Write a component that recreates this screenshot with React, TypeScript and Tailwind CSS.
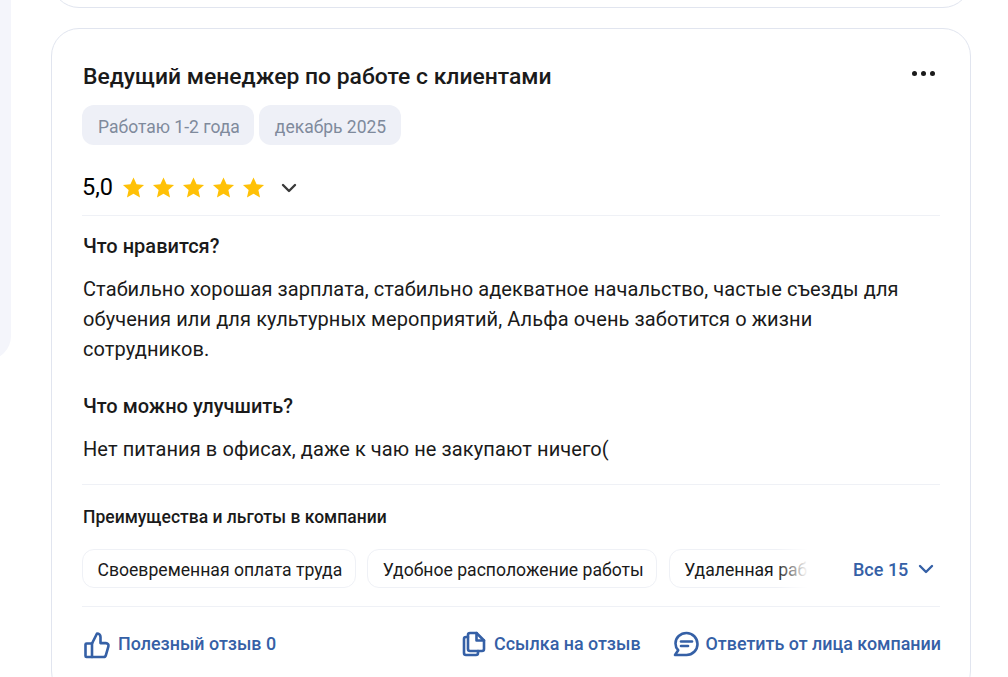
import { ChevronDown } from 'lucide-react';

const benefits = ['Своевременная оплата труда', 'Удобное расположение работы', 'Удаленная работа'];

function Star() {
  return (
    <svg width="23" height="23" viewBox="0 0 24 24" className="fill-[#ffc107]">
      <path d="M12 1.500l3.200 7.200 7.800.8-5.900 5.200 1.700 7.700L12 18.400l-6.800 4 1.700-7.700L1 9.500l7.800-.8z" />
    </svg>
  );
}

function ThumbIcon() {
  return (
    <svg width="28" height="28" viewBox="0 0 28 28" fill="none" className="stroke-[#3560a6]" strokeWidth="2.6" strokeLinejoin="round" strokeLinecap="round">
      <path d="M9 12.500H3.500a1 1 0 0 0-1 1V25a1 1 0 0 0 1 1H20.500a2.500 2.500 0 0 0 2.400-1.900l2.500-8.800a2.500 2.500 0 0 0-2.400-3.200H17.500V6a3.500 3.500 0 0 0-3.500-3.500L9 12.500z" />
      <path d="M9 12.500V26" />
    </svg>
  );
}

function CopyIcon() {
  return (
    <svg width="24" height="26" viewBox="0 0 24 26" fill="none" className="stroke-[#3560a6]" strokeWidth="2.6" strokeLinejoin="round" strokeLinecap="round">
      <path d="M8 2h6.500L22 9.500V18a2 2 0 0 1-2 2H8a2 2 0 0 1-2-2V4a2 2 0 0 1 2-2z" />
      <path d="M14.500 2v7.500H22" />
      <path d="M6 6H4a2 2 0 0 0-2 2v14a2 2 0 0 0 2 2h10a2 2 0 0 0 2-2v-2" />
    </svg>
  );
}

function ChatIcon() {
  return (
    <svg width="26" height="26" viewBox="0 0 26 26" fill="none" className="stroke-[#3560a6]" strokeWidth="2.6" strokeLinejoin="round" strokeLinecap="round">
      <path d="M13.500 2C7.400 2 2.500 6.600 2.500 12.400c0 2.600 1 5 2.700 6.800L2 24h11.500c6.100 0 11-4.900 11-11S19.600 2 13.500 2z" />
      <path d="M8 10.500h11" />
      <path d="M8 15h7" />
    </svg>
  );
}

export default function App() {
  return (
    <div className="flex h-[677px] w-[1008px] overflow-hidden bg-white font-['Roboto',sans-serif] text-[#1a1a1a]">
      <div className="-ml-6 h-[360px] w-[35px] shrink-0 rounded-br-3xl bg-[#f4f5fb]" />

      <div className="ml-10 w-[920px] shrink-0">
        <div className="-mt-10 h-12 rounded-b-[28px] border border-[#e1e5ef] bg-white" />

        <article className="mt-5 rounded-[28px] border border-[#e1e5ef] bg-white px-[30px] pt-[31px] pb-4">
          <div className="flex items-start justify-between">
            <h2 className="ml-px text-[22.900px] leading-[33px] font-medium">Ведущий менеджер по работе с клиентами</h2>
            <div className="mt-[11px] mr-[5px] flex gap-1">
              <span className="h-[5px] w-[5px] rounded-full bg-[#1a1a1a]" />
              <span className="h-[5px] w-[5px] rounded-full bg-[#1a1a1a]" />
              <span className="h-[5px] w-[5px] rounded-full bg-[#1a1a1a]" />
            </div>
          </div>

          <div className="mt-3 flex gap-[5px]">
            <span className="flex h-10 items-center rounded-xl bg-[#eef0f7] pt-1 pr-[14px] pl-4 text-[17.500px] text-[#7f8a9c]">Работаю 1-2 года</span>
            <span className="flex h-10 items-center rounded-xl bg-[#eef0f7] pt-1 pr-[15px] pl-4 text-[17.500px] text-[#7f8a9c]">декабрь 2025</span>
          </div>

          <div className="mt-[26px] flex h-[33px] items-center">
            <span className="text-[23.500px] leading-[33px] text-black">5,0</span>
            <div className="ml-[9px] flex gap-[7px]">
              <Star />
              <Star />
              <Star />
              <Star />
              <Star />
            </div>
            <ChevronDown className="ml-[12px] h-6 w-6 text-[#3a3a3a]" strokeWidth={2.4} />
          </div>

          <div className="mt-[11px] border-t border-[#eff1f6] pt-[17px] pl-px">
            <h3 className="text-[20px] leading-[27px] font-medium">Что нравится?</h3>
            <p className="mt-[14px] w-[840px] text-[20px] leading-[30px] tracking-[0.09px]">
              Стабильно хорошая зарплата, стабильно адекватное начальство, частые съезды для обучения или для культурных мероприятий, Альфа очень заботится о жизни сотрудников.
            </p>
            <h3 className="mt-[29px] text-[20px] leading-[27px] font-medium">Что можно улучшить?</h3>
            <p className="mt-[14px] text-[20px] leading-[30px] tracking-[0.09px]">Нет питания в офисах, даже к чаю не закупают ничего(</p>
          </div>

          <div className="mt-5 border-t border-[#eff1f6] pt-5">
            <h4 className="ml-px text-[17.500px] leading-6 font-medium">Преимущества и льготы в компании</h4>
            <div className="mt-5 flex items-center">
              <div className="relative flex w-[726px] gap-[11.500px] overflow-hidden">
                {benefits.map((item) => (
                  <span key={item} className="flex h-[39px] shrink-0 items-center rounded-xl border border-[#eff1f6] pt-1 pr-[12.500px] pl-[14.500px] text-[17.600px] whitespace-nowrap">
                    {item}
                  </span>
                ))}
                <div className="absolute top-0 right-0 h-full w-8 bg-gradient-to-r from-white/0 to-white" />
              </div>
              <span className="ml-[45px] pt-[2px] text-[18px] font-medium whitespace-nowrap text-[#3560a6]">Все 15</span>
              <ChevronDown className="ml-[6px] h-6 w-6 text-[#3560a6]" strokeWidth={2.4} />
            </div>
          </div>

          <div className="mt-[18px] flex h-[76px] items-center justify-between border-t border-[#eff1f6] text-[17.900px] font-medium text-[#3560a6]">
            <div className="ml-px flex items-center gap-[7px]">
              <ThumbIcon />
              <span>Полезный отзыв 0</span>
            </div>
            <div className="-mr-px flex items-center">
              <CopyIcon />
              <span className="ml-[8px]">Ссылка на отзыв</span>
              <span className="ml-[32px]"><ChatIcon /></span>
              <span className="ml-[7px]">Ответить от лица компании</span>
            </div>
          </div>
        </article>
      </div>
    </div>
  );
}
